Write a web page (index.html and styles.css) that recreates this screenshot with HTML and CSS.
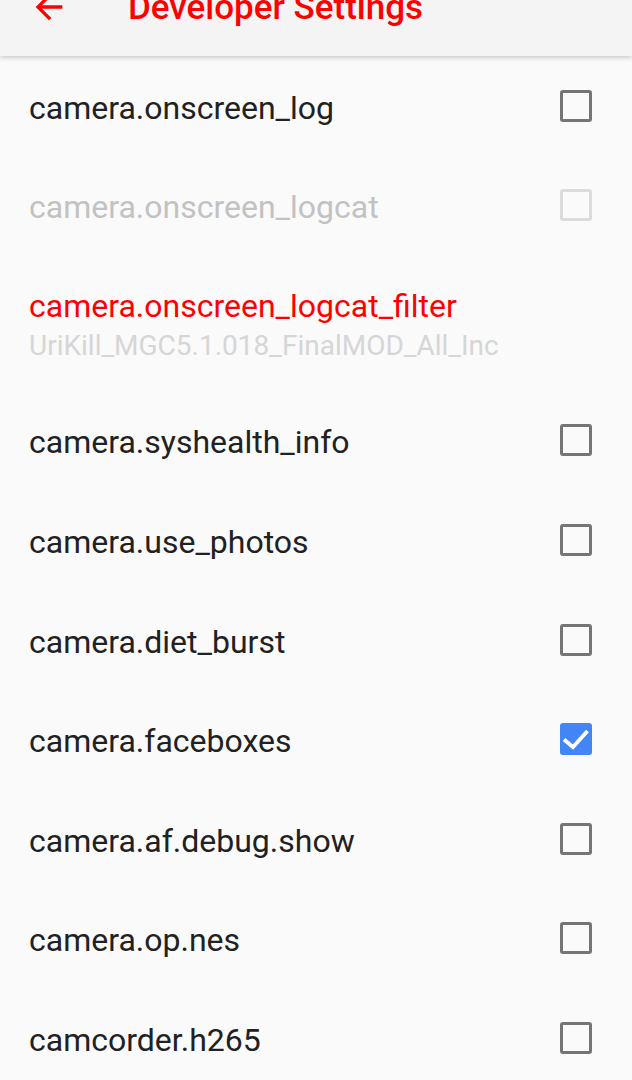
FILE: index.html
```html
<!DOCTYPE html>
<html lang="en">
<head>
  <meta charset="UTF-8">
  <meta name="viewport" content="width=device-width, initial-scale=1.0">
  <title>Developer Settings</title>
  <link rel="stylesheet" href="styles.css">
</head>
<body>
  <!-- Toolbar -->
  <header class="toolbar">
    <svg class="back-icon" viewBox="0 0 24 24" width="40" height="40">
      <path d="M20 11H7.83l5.59-5.59L12 4l-8 8 8 8 1.41-1.41L7.83 13H20v-2z" fill="#ff0000"/>
    </svg>
    <h1 class="toolbar-title">Developer Settings</h1>
  </header>

  <ul class="pref-list">
    <li class="pref-row">
      <span class="pref-title">camera.onscreen_log</span>
      <span class="checkbox"></span>
    </li>
    <li class="pref-row disabled">
      <span class="pref-title">camera.onscreen_logcat</span>
      <span class="checkbox"></span>
    </li>
    <li class="pref-row tall">
      <div class="pref-text">
        <span class="pref-title accent">camera.onscreen_logcat_filter</span>
        <span class="pref-summary">UriKill_MGC5.1.018_FinalMOD_All_Inc</span>
      </div>
    </li>
    <li class="pref-row">
      <span class="pref-title">camera.syshealth_info</span>
      <span class="checkbox"></span>
    </li>
    <li class="pref-row">
      <span class="pref-title">camera.use_photos</span>
      <span class="checkbox"></span>
    </li>
    <li class="pref-row">
      <span class="pref-title">camera.diet_burst</span>
      <span class="checkbox"></span>
    </li>
    <li class="pref-row">
      <span class="pref-title">camera.faceboxes</span>
      <span class="checkbox checked">
        <svg viewBox="0 0 32 32" width="32" height="32">
          <path d="M4 16.5l9 7.5L27.5 8" fill="none" stroke="#fff" stroke-width="3.8"/>
        </svg>
      </span>
    </li>
    <li class="pref-row">
      <span class="pref-title">camera.af.debug.show</span>
      <span class="checkbox"></span>
    </li>
    <li class="pref-row">
      <span class="pref-title">camera.op.nes</span>
      <span class="checkbox"></span>
    </li>
    <li class="pref-row">
      <span class="pref-title">camcorder.h265</span>
      <span class="checkbox"></span>
    </li>
  </ul>
</body>
</html>
```

FILE: styles.css
```css
:root {
  --color-background: #fafafa;
  --color-toolbar: #f4f4f4;
  --color-accent: #ff0000;
  --color-text: #212121;
  --color-disabled: #c2c2c2;
  --color-summary: #d6d6d6;
  --color-box: #757575;
  --color-checked: #4285f4;

  --font-body: Roboto, 'Noto Sans', sans-serif;
}

* {
  margin: 0;
  padding: 0;
  box-sizing: border-box;
}

body {
  background-color: var(--color-background);
  color: var(--color-text);
  font-family: var(--font-body);
  overflow: hidden;
}

.toolbar {
  height: 56px;
  background-color: var(--color-toolbar);
  display: flex;
  align-items: flex-start;
  box-shadow: 0 2px 4px rgba(0, 0, 0, 0.18);
  position: relative;
  z-index: 2;
}

.back-icon {
  margin: -13px 0 0 29px;
  flex-shrink: 0;
}

.toolbar-title {
  margin: -14px 0 0 59px;
  font-size: 35px;
  font-weight: 500;
  color: var(--color-accent);
  line-height: 44px;
  white-space: nowrap;
}

.pref-list {
  list-style: none;
}

.pref-row {
  height: 99.6px;
  display: flex;
  align-items: center;
  justify-content: space-between;
  padding: 0 40px 0 29px;
}

.pref-row.tall {
  height: 135.5px;
  padding-top: 6px;
}

.pref-text {
  display: flex;
  flex-direction: column;
}

.pref-title {
  font-size: 32px;
  line-height: 40px;
  padding-top: 4px;
}

.pref-text .pref-title {
  padding-top: 0;
}

.pref-title.accent {
  color: var(--color-accent);
}

.pref-summary {
  font-size: 28px;
  line-height: 39px;
  color: var(--color-summary);
}

.disabled .pref-title {
  color: var(--color-disabled);
}

.checkbox {
  width: 32px;
  height: 32px;
  border: 3px solid var(--color-box);
  border-radius: 3px;
  display: flex;
  align-items: center;
  justify-content: center;
  flex-shrink: 0;
}

.disabled .checkbox {
  border-color: #dcdcdc;
}

.checkbox.checked {
  background-color: var(--color-checked);
  border: none;
}
```
